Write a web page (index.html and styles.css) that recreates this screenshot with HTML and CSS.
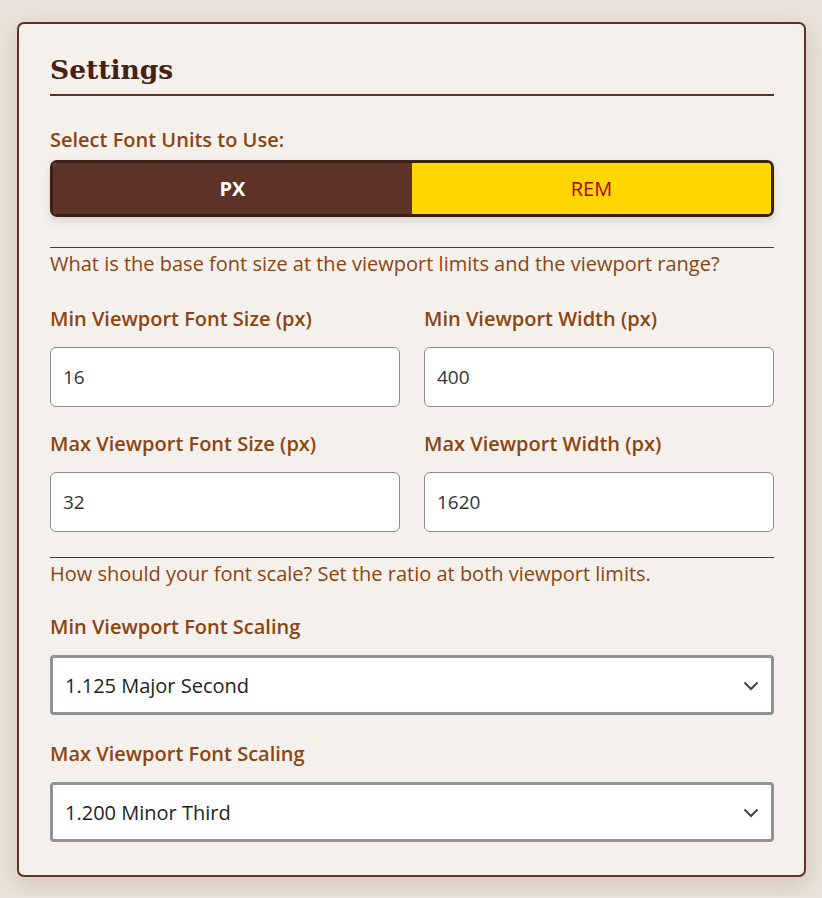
FILE: index.html
```html
<!DOCTYPE html>
<html lang="en">
<head>
<meta charset="utf-8">
<title>Settings</title>
<link rel="stylesheet" href="styles.css">
</head>
<body>
<div class="card">
  <h2 class="title">Settings</h2>
  <div class="units">
    <div class="label">Select Font Units to Use:</div>
    <div class="toggle">
      <button class="toggle-btn active">PX</button>
      <button class="toggle-btn rem">REM</button>
    </div>
  </div>
  <hr class="rule">
  <p class="desc">What is the base font size at the viewport limits and the viewport range?</p>
  <div class="grid">
    <div class="field">
      <label class="label">Min Viewport Font Size (px)</label>
      <input class="input" type="text" value="16">
    </div>
    <div class="field">
      <label class="label">Min Viewport Width (px)</label>
      <input class="input" type="text" value="400">
    </div>
    <div class="field">
      <label class="label">Max Viewport Font Size (px)</label>
      <input class="input" type="text" value="32">
    </div>
    <div class="field">
      <label class="label">Max Viewport Width (px)</label>
      <input class="input" type="text" value="1620">
    </div>
  </div>
  <hr class="rule rule-2">
  <p class="desc">How should your font scale? Set the ratio at both viewport limits.</p>
  <div class="selects">
    <div class="field">
      <label class="label">Min Viewport Font Scaling</label>
      <div class="select-wrap">
        <select class="select"><option>1.125 Major Second</option></select>
        <svg class="chev" width="16" height="10" viewBox="0 0 16 10"><path d="M1.5 1.5 L8 8 L14.5 1.5" fill="none" stroke="#444" stroke-width="2"/></svg>
      </div>
    </div>
    <div class="field">
      <label class="label">Max Viewport Font Scaling</label>
      <div class="select-wrap">
        <select class="select"><option>1.200 Minor Third</option></select>
        <svg class="chev" width="16" height="10" viewBox="0 0 16 10"><path d="M1.5 1.5 L8 8 L14.5 1.5" fill="none" stroke="#444" stroke-width="2"/></svg>
      </div>
    </div>
  </div>
</div>
</body>
</html>
```

FILE: styles.css
```css
html, body {
  margin: 0;
  padding: 0;
}
body {
  background: #ebe3d9;
  font-family: "Open Sans", "Noto Sans", sans-serif;
  padding: 22px 16px 20px 17px;
}
.card {
  background: #f4f1ec;
  border: 2px solid #5c3326;
  border-radius: 7px;
  padding: 26px 30px 33px 31px;
  box-shadow: 0 8px 24px rgba(90, 60, 30, 0.18);
}
.title {
  margin: 0;
  font-family: "DejaVu Serif", "Liberation Serif", serif;
  font-weight: bold;
  font-size: 26.5px;
  line-height: 40px;
  color: #452014;
  padding-bottom: 4px;
  border-bottom: 2px solid #5c3326;
}
.label {
  display: block;
  font-size: 20px;
  line-height: 30px;
  font-weight: 600;
  color: #8b4513;
}
.units {
  margin-top: 29px;
}
.toggle {
  margin-top: 5px;
  display: flex;
  border: 3px solid #3e1f15;
  border-radius: 7px;
  overflow: hidden;
  box-shadow: 0 4px 8px rgba(0, 0, 0, 0.12);
}
.toggle-btn {
  flex: 1;
  height: 51px;
  border: 0;
  margin: 0;
  font-family: "Open Sans", "Noto Sans", sans-serif;
  font-size: 20px;
  font-weight: 400;
  background: #ffd700;
  color: #b00000;
}
.toggle-btn.active {
  background: #5c3326;
  color: #ffffff;
  font-weight: 700;
}
.rule {
  border: 0;
  border-top: 1px solid #5c3326;
  margin: 30px 0 0 0;
}
.rule-2 {
  margin-top: 25px;
}
.desc {
  margin: 1px 0 0 0;
  font-size: 20px;
  line-height: 30px;
  color: #8b4513;
}
.grid {
  margin-top: 25px;
  display: grid;
  grid-template-columns: 1fr 1fr;
  column-gap: 24px;
  row-gap: 22px;
}
.field {
  display: flex;
  flex-direction: column;
  gap: 13px;
}
.input {
  box-sizing: border-box;
  width: 100%;
  height: 60px;
  border: 1px solid #8d8d8d;
  border-radius: 6px;
  background: #fff;
  padding: 0 12px;
  font-family: "Open Sans", "Noto Sans", sans-serif;
  font-size: 19px;
  color: #333;
}
.selects {
  margin-top: 23px;
  display: flex;
  flex-direction: column;
  gap: 24px;
}
.select-wrap {
  position: relative;
}
.select {
  box-sizing: border-box;
  width: 100%;
  height: 60px;
  -webkit-appearance: none;
  appearance: none;
  border: 3px solid #8f9296;
  border-radius: 4px;
  background: #fff;
  padding: 0 40px 0 12px;
  font-family: "Open Sans", "Noto Sans", sans-serif;
  font-size: 20px;
  color: #212529;
}
.chev {
  position: absolute;
  right: 15px;
  top: 26px;
  pointer-events: none;
}
```
